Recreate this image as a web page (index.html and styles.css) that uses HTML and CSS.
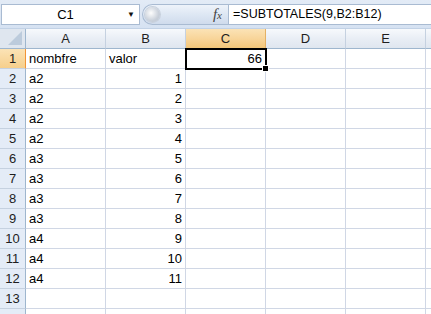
FILE: index.html
```html
<!DOCTYPE html>
<html lang="es">
<head>
    <meta charset="UTF-8">
    <title>Hoja1</title>
    <link rel="stylesheet" href="styles.css">
</head>
<body>
    <div class="formula-bar">
        <div class="name-box">
            <span class="name">C1</span>
            <span class="drop">&#9660;</span>
        </div>
        <div class="fx-pill">
            <span class="knob"></span>
            <span class="fx"><i>f</i><small>x</small></span>
        </div>
        <div class="formula">=SUBTOTALES(9,B2:B12)</div>
    </div>

    <div class="sheet">
        <div class="corner"><span class="tri"></span></div>
        <div class="col-head">A</div>
        <div class="col-head">B</div>
        <div class="col-head active">C</div>
        <div class="col-head">D</div>
        <div class="col-head">E</div>
        <div class="col-head last"></div>

        <div class="row-head active">1</div>
        <div class="cell">nombfre</div>
        <div class="cell">valor</div>
        <div class="cell num selected">66<span class="handle"></span></div>
        <div class="cell"></div>
        <div class="cell"></div>
        <div class="cell last"></div>

        <div class="row-head">2</div><div class="cell">a2</div><div class="cell num">1</div><div class="cell"></div><div class="cell"></div><div class="cell"></div><div class="cell last"></div>
        <div class="row-head">3</div><div class="cell">a2</div><div class="cell num">2</div><div class="cell"></div><div class="cell"></div><div class="cell"></div><div class="cell last"></div>
        <div class="row-head">4</div><div class="cell">a2</div><div class="cell num">3</div><div class="cell"></div><div class="cell"></div><div class="cell"></div><div class="cell last"></div>
        <div class="row-head">5</div><div class="cell">a2</div><div class="cell num">4</div><div class="cell"></div><div class="cell"></div><div class="cell"></div><div class="cell last"></div>
        <div class="row-head">6</div><div class="cell">a3</div><div class="cell num">5</div><div class="cell"></div><div class="cell"></div><div class="cell"></div><div class="cell last"></div>
        <div class="row-head">7</div><div class="cell">a3</div><div class="cell num">6</div><div class="cell"></div><div class="cell"></div><div class="cell"></div><div class="cell last"></div>
        <div class="row-head">8</div><div class="cell">a3</div><div class="cell num">7</div><div class="cell"></div><div class="cell"></div><div class="cell"></div><div class="cell last"></div>
        <div class="row-head">9</div><div class="cell">a3</div><div class="cell num">8</div><div class="cell"></div><div class="cell"></div><div class="cell"></div><div class="cell last"></div>
        <div class="row-head">10</div><div class="cell">a4</div><div class="cell num">9</div><div class="cell"></div><div class="cell"></div><div class="cell"></div><div class="cell last"></div>
        <div class="row-head">11</div><div class="cell">a4</div><div class="cell num">10</div><div class="cell"></div><div class="cell"></div><div class="cell"></div><div class="cell last"></div>
        <div class="row-head">12</div><div class="cell">a4</div><div class="cell num">11</div><div class="cell"></div><div class="cell"></div><div class="cell"></div><div class="cell last"></div>
        <div class="row-head">13</div><div class="cell"></div><div class="cell"></div><div class="cell"></div><div class="cell"></div><div class="cell"></div><div class="cell last"></div>
        <div class="row-head"></div><div class="cell"></div><div class="cell"></div><div class="cell"></div><div class="cell"></div><div class="cell"></div><div class="cell last"></div>
    </div>
</body>
</html>
```

FILE: styles.css
```css
body {
    margin: 0;
    width: 431px;
    height: 314px;
    overflow: hidden;
    background: #fff;
    font-family: "Liberation Sans", Arial, sans-serif;
    font-size: 13px;
    color: #000;
}

/* barra de fórmulas */
.formula-bar {
    display: flex;
    align-items: center;
    height: 29px;
    padding: 0 0 0 1px;
    box-sizing: border-box;
    background: linear-gradient(#e3ebf6, #d6e2f2);
    border-bottom: 1px solid #c2d2e6;
}
.name-box {
    display: flex;
    align-items: center;
    width: 139px;
    height: 21px;
    background: #fff;
    border: 1px solid #a9bbd2;
    box-sizing: border-box;
}
.name-box .name {
    flex: 1;
    text-align: center;
    padding-left: 6px;
}
.name-box .drop {
    font-size: 8px;
    color: #111;
    width: 16px;
    text-align: center;
}
.fx-pill {
    display: flex;
    align-items: center;
    justify-content: space-between;
    width: 86px;
    height: 21px;
    margin-left: 2px;
    box-sizing: border-box;
    border: 1px solid #a9bbd2;
    border-right: none;
    border-radius: 11px 0 0 11px;
    background: linear-gradient(#eef3fa, #dce6f3 55%, #cfdbec);
    padding: 0 6px 0 2px;
}
.fx-pill .knob {
    width: 15px;
    height: 15px;
    border-radius: 50%;
    background: radial-gradient(circle at 40% 40%, #fdfdfd, #c9d0da 60%, #b8c1cd);
    box-shadow: 0 0 0 1px #c8d1dd;
}
.fx-pill .fx {
    font-family: "Liberation Serif", serif;
    font-size: 15px;
    color: #444;
}
.fx-pill .fx small {
    font-size: 11px;
    font-style: italic;
}
.formula {
    flex: 1;
    height: 21px;
    line-height: 19px;
    box-sizing: border-box;
    background: #fff;
    border: 1px solid #a9bbd2;
    border-right: none;
    padding-left: 4px;
    font-size: 12.5px;
}

/* hoja */
.sheet {
    display: grid;
    grid-template-columns: 26px repeat(5, 80px) 1fr;
    grid-template-rows: 20px;
    grid-auto-rows: 20px;
}
.corner, .col-head {
    height: 20px;
    box-sizing: border-box;
    background: linear-gradient(#f7f9fc, #e9eef5 50%, #dfe6ef);
    border-right: 1px solid #c5d1e0;
    border-bottom: 1px solid #9eb6ce;
    text-align: center;
    line-height: 20px;
    color: #1e1e1e;
}
.corner {
    position: relative;
    border-right: 1px solid #9eb6ce;
    background: #dfe6ef;
}
.corner .tri {
    position: absolute;
    right: 3px;
    bottom: 3px;
    width: 0;
    height: 0;
    border-left: 14px solid transparent;
    border-bottom: 14px solid #bccbdc;
}
.col-head.active {
    background: linear-gradient(#fbe3b6, #f8d59a 50%, #f3c679);
    border-bottom-color: #f29436;
    border-right-color: #e4b165;
}
.col-head.last {
    border-right: none;
}
.row-head {
    box-sizing: border-box;
    background: #e4ecf7;
    border-right: 1px solid #9eb6ce;
    border-bottom: 1px solid #c5d1e0;
    text-align: center;
    line-height: 19px;
    color: #1e1e1e;
}
.row-head.active {
    background: linear-gradient(#fbe3b6, #f6cf8c);
    border-right-color: #f29436;
}
.cell {
    box-sizing: border-box;
    border-right: 1px solid #d0d7e5;
    border-bottom: 1px solid #d0d7e5;
    line-height: 19px;
    padding: 0 3px 0 3px;
    white-space: nowrap;
    overflow: hidden;
}
.cell.num {
    text-align: right;
}
.cell.last {
    border-right: none;
}
.cell.selected {
    position: relative;
    overflow: visible;
    outline: 2px solid #000;
    outline-offset: -1px;
    z-index: 1;
}
.handle {
    position: absolute;
    right: -4px;
    bottom: -4px;
    width: 5px;
    height: 5px;
    background: #000;
    border: 1px solid #fff;
}
```
